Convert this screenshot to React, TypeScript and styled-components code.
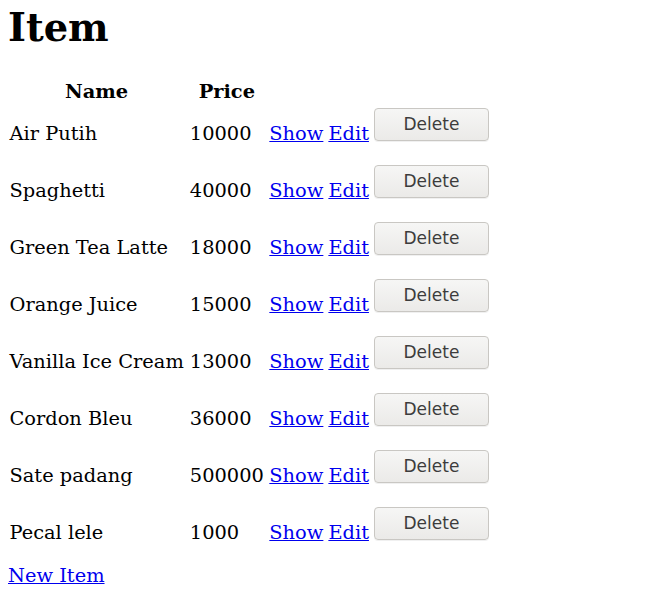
import React from "react";
import styled, { createGlobalStyle } from "styled-components";

const Global = createGlobalStyle`
  html, body { margin: 0; padding: 0; background: #fff; }
  body {
    padding: 5px 8px 8px 8px;
    font-family: "DejaVu Serif", serif;
    font-size: 19.4px;
    color: #000;
  }
`;

const Page = styled.div`
  display: flex;
  flex-direction: column;
  align-items: flex-start;
`;

const Title = styled.h1`
  font-family: "DejaVu Serif", serif;
  font-weight: bold;
  font-size: 38.4px;
  line-height: 45px;
  margin: 0 0 28px 0;
`;

const Table = styled.table`
  border-collapse: separate;
  border-spacing: 3px 2px;
  margin: 0 0 0 -3px;
  font-size: 19.4px;
`;

const Th = styled.th`
  padding: 1px 1.5px;
  font-weight: bold;
  text-align: center;
  line-height: 22px;
`;

const Td = styled.td<{ $tight?: boolean }>`
  padding: ${(p) => (p.$tight ? "1px 1px" : "1px 1.5px")};
  vertical-align: middle;
  line-height: 22px;
  white-space: nowrap;
`;

const Link = styled.a`
  color: #0000ee;
  text-decoration: underline;
  cursor: pointer;
`;

const DeleteButton = styled.button`
  display: block;
  width: 115px;
  height: 33px;
  margin: 1px 0 19px 0;
  padding: 0 0 1px 0;
  border: 1px solid #c9c7c3;
  border-radius: 4px;
  background: linear-gradient(#f6f6f5, #ebeae8);
  font-family: "DejaVu Sans", sans-serif;
  font-size: 17px;
  color: #3c3c3c;
  box-shadow: 0 1px 0 rgba(0, 0, 0, 0.06);
`;

const NewLink = styled(Link)`
  margin-top: 3px;
  line-height: 22px;
`;

const items = [
  ["Air Putih", "10000"],
  ["Spaghetti", "40000"],
  ["Green Tea Latte", "18000"],
  ["Orange Juice", "15000"],
  ["Vanilla Ice Cream", "13000"],
  ["Cordon Bleu", "36000"],
  ["Sate padang", "500000"],
  ["Pecal lele", "1000"],
];

export default function App() {
  return (
    <Page>
      <Global />
      <Title>Item</Title>
      <Table>
        <thead>
          <tr>
            <Th>Name</Th>
            <Th>Price</Th>
            <Th colSpan={3}></Th>
          </tr>
        </thead>
        <tbody>
          {items.map(([name, price]) => (
            <tr key={name}>
              <Td>{name}</Td>
              <Td>{price}</Td>
              <Td $tight>
                <Link>Show</Link>
              </Td>
              <Td $tight>
                <Link>Edit</Link>
              </Td>
              <Td $tight>
                <DeleteButton>Delete</DeleteButton>
              </Td>
            </tr>
          ))}
        </tbody>
      </Table>
      <NewLink>New Item</NewLink>
    </Page>
  );
}
